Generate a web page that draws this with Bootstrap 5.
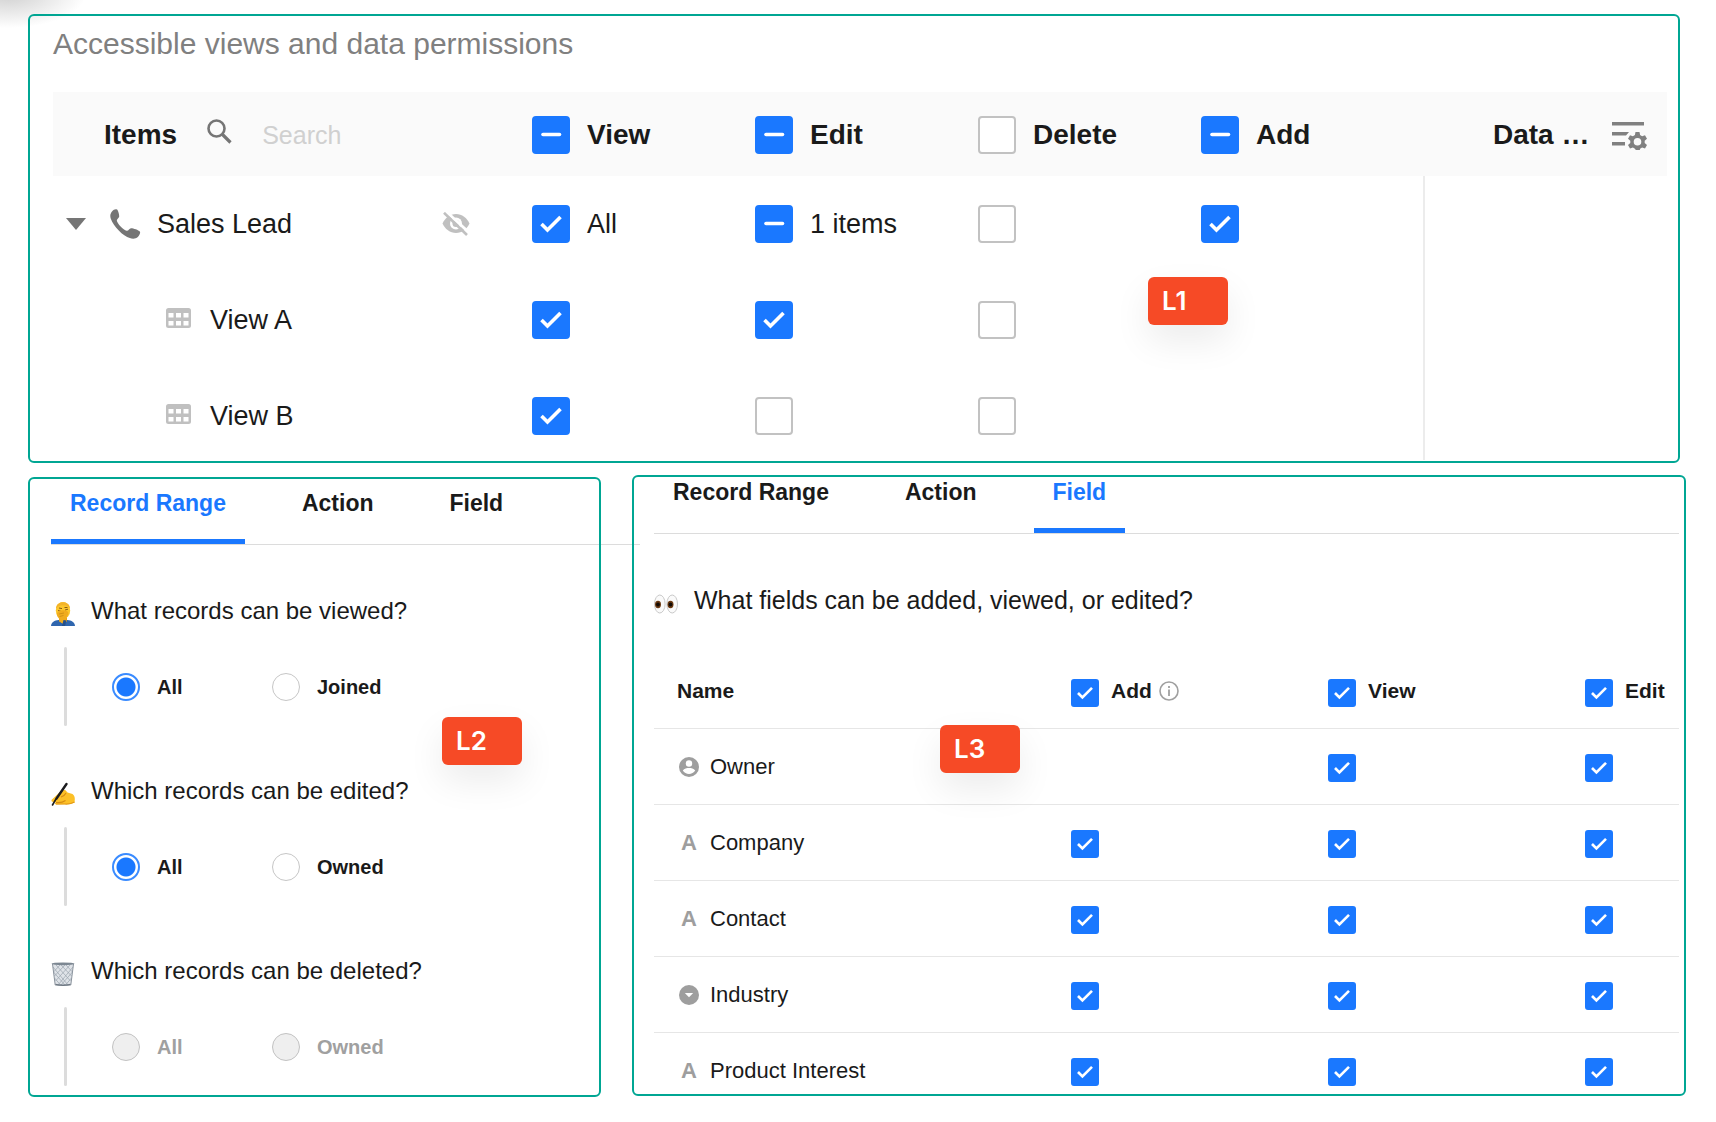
<!DOCTYPE html>
<html lang="en">
<head>
<meta charset="utf-8">
<meta name="viewport" content="width=device-width, initial-scale=1">
<title>Role permissions</title>
<link href="https://cdn.jsdelivr.net/npm/bootstrap@5.3.0/dist/css/bootstrap.min.css" rel="stylesheet">
<style>
  body {
    font-family: "Liberation Sans", Arial, sans-serif;
    color: #1a1a1a;
    background: radial-gradient(ellipse 78px 34px at 8px -6px, #d0d0d0, rgba(255,255,255,0)) no-repeat #fff;
  }
  .page { padding: 14px 30px 24px 28px; }
  .lower { gap: 31px; margin-top: 12px; }

  /* Framed panels: the frame is drawn over the content */
  .panel { position: relative; min-width: 0; }
  .panel::after { content: ""; position: absolute; inset: 0; border: 2px solid #00a693; border-radius: 6px; pointer-events: none; }
  .panel-views { margin-right: 6px; padding: 12px 13px 3px 25px; }
  .panel-range { flex: 550 1 0; margin-top: 2px; padding: 12px 0 11px 23px; }
  .panel-field { flex: 1025 1 0; margin-bottom: 1px; padding: 3px 7px 10px 22px; }

  .level-tag {
    position: absolute; z-index: 2; width: 80px; height: 48px; padding-left: 14px;
    border-radius: 6px; background: #f64a26; color: #fff;
    font: 600 26px/48px Inter, "Liberation Sans", sans-serif;
    box-shadow: 0 16px 36px rgba(0,0,0,.08);
  }
  .tag-1 { top: 263px; right: 452px; }
  .tag-2 { top: 240px; right: 79px; }
  .tag-3 { top: 250px; left: 308px; }

  .form-check-input[type=checkbox], .form-check-input[type=radio] { margin: 0; flex: none; box-shadow: none; }
  .form-check-input[type=checkbox] { width: 28px; height: 28px; border: 2px solid #c2c2c2; border-radius: 3px; background-origin: border-box; background-size: 100% 100%; }
  .panel-views .form-check-input[type=checkbox] { width: 38px; height: 38px; border-radius: 4px; }
  .form-check-input[type=checkbox]:checked, .form-check-input[type=checkbox]:indeterminate { background-color: #1a78ff; border-color: #1a78ff; }
  .form-check-input[type=checkbox]:checked { background-image: url("data:image/svg+xml,%3Csvg xmlns='http://www.w3.org/2000/svg' viewBox='0 0 38 38'%3E%3Cpath d='M9.500 19l6 6L28.500 12' fill='none' stroke='%23fff' stroke-width='3.6'/%3E%3C/svg%3E"); }
  .form-check-input[type=checkbox]:indeterminate { background-image: url("data:image/svg+xml,%3Csvg xmlns='http://www.w3.org/2000/svg' viewBox='0 0 38 38'%3E%3Cpath d='M11 18.500h16.500' fill='none' stroke='%23fff' stroke-width='3.6' stroke-linecap='round'/%3E%3C/svg%3E"); }

  .panel-title { margin: 0 0 30px; font-size: 30px; line-height: 36px; font-weight: 400; color: #808080; }
  .perm-grid, .field-grid { width: 100%; table-layout: fixed; border-collapse: separate; border-spacing: 0; }
  .perm-grid th, .perm-grid td { padding: 29px 0; height: 96px; font-size: 27px; line-height: 38px; font-weight: 400; }
  .perm-grid thead th { padding: 24px 0 22px; height: 84px; background: #fafafa; font-size: 28px; font-weight: 700; }
  .perm-grid tbody tr:last-child > * { padding-bottom: 25px; height: 92px; }
  .perm-grid tbody td:last-child { border-left: 2px solid #ececec; }
  .col-perm { width: 223px; }
  .col-add { width: 222px; }
  .col-data { width: 244px; }
  .mark-row { display: flex; align-items: center; gap: 17px; }
  .items-head { padding-left: 51px; }
  .search-ico { margin: 0 30px 8px; }
  .search-box { width: 160px; padding: 0; border: 0; background: transparent; font-size: 25px; line-height: 38px; outline: 0; }
  .search-box::placeholder { color: #d0d0d0; opacity: 1; }
  .lead-row { padding: 0 62px 0 13px; }
  .lead-ico { margin: 0 16px 0 24px; }
  .sub-row { padding-left: 113px; gap: 19px; }
  .sub-row svg { margin-bottom: 5px; }
  .data-head { padding-left: 70px; gap: 23px; }
  .bare { padding: 0; border: 0; background: none; line-height: 0; }

  .tab-strip { gap: 38px; border-bottom: 1px solid #dcdcdc; }
  .tab-strip .nav-link { padding: 0 19px 22px; border-bottom: 5px solid transparent; font-size: 23px; line-height: 28px; font-weight: 700; color: #1a1a1a; }
  .tab-strip .nav-link.active { color: #1a78ff; border-color: #1a78ff; }
  .panel-range .tab-strip { margin-right: -39px; }

  .ask { display: flex; align-items: flex-end; gap: 16px; margin: 0; font-size: 24px; line-height: 30px; font-weight: 400; }
  .panel-range .ask { margin-top: 50px; }
  .panel-range .tab-strip + .ask { margin-top: 51px; }
  .panel-field .ask { margin-top: 51px; font-size: 25px; }
  .choices { display: flex; align-items: center; height: 79px; margin: 21px 0 0 13px; padding-left: 48px; position: relative; }
  .choices::before { content: ""; position: absolute; inset: 0 auto 0 0; width: 3px; border-radius: 2px; background: #dcdcdc; }
  .choice { display: flex; align-items: center; gap: 17px; width: 160px; font-size: 20px; line-height: 28px; font-weight: 700; }
  .form-check-input[type=radio] { width: 28px; height: 28px; border: 1px solid #c6c6c6; }
  .form-check-input[type=radio]:checked { background: radial-gradient(circle, #1a78ff 9px, #fff 10px); border: 2px solid #3a8bff; }
  .form-check-input[type=radio]:disabled { opacity: 1; background: #efefef; border-color: #c2c2c2; }
  .form-check-input[type=radio]:disabled ~ label { opacity: 1; color: #a0a0a0; }

  .field-grid { margin-top: 39px; }
  .field-grid th, .field-grid td { padding: 25px 0 22px; vertical-align: top; border-bottom: 1px solid #e6e6e6; font-size: 22px; line-height: 26px; font-weight: 400; }
  .field-grid thead th { padding-bottom: 21px; font-size: 21px; line-height: 24px; font-weight: 700; }
  .field-grid th:first-child { padding-left: 23px; }
  .field-grid tbody tr:last-child > * { border: 0; padding-bottom: 0; }
  .field-grid input { display: block; }
  .col-flag { width: 257px; }
  .col-last { width: 94px; }
  .flag-head { display: flex; gap: 12px; }
  .flag-note { display: flex; gap: 7px; }
  .field-name { display: flex; align-items: center; gap: 11px; padding-left: 2px; }
  .type-ico { width: 20px; flex: none; text-align: center; font-weight: 700; color: #9e9e9e; line-height: 26px; display: flex; justify-content: center; align-items: center; height: 26px; }
</style>
</head>
<body>
<main class="page">

  <section class="panel panel-views" aria-labelledby="views-title">
    <h2 class="panel-title" id="views-title">Accessible views and data permissions</h2>
    <table class="perm-grid">
      <colgroup><col><col class="col-perm"><col class="col-perm"><col class="col-perm"><col class="col-add"><col class="col-data"></colgroup>
      <thead>
        <tr>
          <th scope="col">
            <div class="d-flex align-items-center items-head">
              <label for="search">Items</label>
              <svg class="search-ico" width="25" height="25" viewBox="0 0 25 25" fill="none" stroke="#757575" stroke-width="2.600" aria-hidden="true"><circle cx="9.500" cy="9.500" r="8"/><path d="M15 15l8.500 8.500" stroke-width="3.200"/></svg>
              <input class="search-box" id="search" type="text" placeholder="Search">
            </div>
          </th>
          <th scope="col"><div class="mark-row"><input class="form-check-input" type="checkbox" id="h-view" data-partial><label for="h-view">View</label></div></th>
          <th scope="col"><div class="mark-row"><input class="form-check-input" type="checkbox" id="h-edit" data-partial><label for="h-edit">Edit</label></div></th>
          <th scope="col"><div class="mark-row"><input class="form-check-input" type="checkbox" id="h-del"><label for="h-del">Delete</label></div></th>
          <th scope="col"><div class="mark-row"><input class="form-check-input" type="checkbox" id="h-add" data-partial><label for="h-add">Add</label></div></th>
          <th scope="col">
            <div class="d-flex align-items-center data-head">
              <span>Data …</span>
              <button class="bare" type="button" aria-label="Data settings">
                <svg width="35" height="30" viewBox="0 0 35 30" aria-hidden="true"><path d="M0 2h32v3.500H0zM0 12h17l-3 3.500H0zM0 22h13v3.500H0z" fill="#808080"/><path d="M23.500 12h4l.6 3 2 1.200 2.900-1 2 3.500-2.300 2v2.400l2.300 2-2 3.500-2.900-1-2 1.200-.3 1.200h-4l-.9-1.200-2-1.200-2.900 1-2-3.500 2.300-2v-2.400l-2.300-2 2-3.500 2.900 1 2-1.200zM25.500 18a3.800 3.800 0 100 7.600 3.800 3.800 0 000-7.600z" fill="#808080" fill-rule="evenodd"/></svg>
              </button>
            </div>
          </th>
        </tr>
      </thead>
      <tbody>
        <tr>
          <th scope="row">
            <div class="d-flex align-items-center lead-row">
              <button class="bare" type="button" aria-label="Collapse Sales Lead"><svg width="20" height="12" viewBox="0 0 20 12" aria-hidden="true"><path d="M0 0h20L10 12z" fill="#757575"/></svg></button>
              <svg class="lead-ico" width="31" height="30" viewBox="0 0 31 30" aria-hidden="true"><path d="M2 2.500C3.500.8 5.500-.2 7 .6c1 .6 2.300 5 2.200 6.800-.1 1.600-2.600 2.400-2.400 4.200.4 3 6.600 9.600 9.800 10.200 2 .3 2.700-2.400 4.400-2.500 2-.1 7.600 1.800 8.800 3.200 1 1.300-.4 4-2 5.500-2 1.900-5.300 2-8 1C13 27.300 3.600 17.500.8 9.800-.2 7.200.3 4.500 2 2.500z" fill="#757575"/></svg>
              <span class="flex-grow-1">Sales Lead</span>
              <svg width="28" height="24" viewBox="0 0 28 24" aria-hidden="true"><path d="M14 2C8 2 3 6 .5 11.500 3 17 8 21 14 21s11-4 13.500-9.500C25 6 20 2 14 2z" fill="#c0c0c0"/><circle cx="14" cy="11.500" r="6" fill="#fff"/><circle cx="14" cy="11.500" r="3.500" fill="#c0c0c0"/><path d="M4-.5L27.500 21" stroke="#fff" stroke-width="3"/><path d="M2 .8L25 23" stroke="#c0c0c0" stroke-width="2.600"/></svg>
            </div>
          </th>
          <td><div class="mark-row"><input class="form-check-input" type="checkbox" id="s-view" checked><label for="s-view">All</label></div></td>
          <td><div class="mark-row"><input class="form-check-input" type="checkbox" id="s-edit" data-partial><label for="s-edit">1 items</label></div></td>
          <td><div class="mark-row"><input class="form-check-input" type="checkbox" aria-label="Delete Sales Lead"></div></td>
          <td><div class="mark-row"><input class="form-check-input" type="checkbox" aria-label="Add Sales Lead" checked></div></td>
          <td></td>
        </tr>
        <tr>
          <th scope="row"><div class="d-flex align-items-center sub-row"><svg width="25" height="20" viewBox="0 0 25 20" aria-hidden="true"><rect width="25" height="20" rx="2.500" fill="#c0c0c0"/><path d="M2.500 5h5v4.500h-5zM10 5h5v4.500h-5zM17.500 5h5v4.500h-5zM2.500 13h5v4.500h-5zM10 13h5v4.500h-5zM17.500 13h5v4.500h-5z" fill="#fff"/></svg><span>View A</span></div></th>
          <td><div class="mark-row"><input class="form-check-input" type="checkbox" aria-label="View, View A" checked></div></td>
          <td><div class="mark-row"><input class="form-check-input" type="checkbox" aria-label="Edit, View A" checked></div></td>
          <td><div class="mark-row"><input class="form-check-input" type="checkbox" aria-label="Delete, View A"></div></td>
          <td></td>
          <td></td>
        </tr>
        <tr>
          <th scope="row"><div class="d-flex align-items-center sub-row"><svg width="25" height="20" viewBox="0 0 25 20" aria-hidden="true"><rect width="25" height="20" rx="2.500" fill="#c0c0c0"/><path d="M2.500 5h5v4.500h-5zM10 5h5v4.500h-5zM17.500 5h5v4.500h-5zM2.500 13h5v4.500h-5zM10 13h5v4.500h-5zM17.500 13h5v4.500h-5z" fill="#fff"/></svg><span>View B</span></div></th>
          <td><div class="mark-row"><input class="form-check-input" type="checkbox" aria-label="View, View B" checked></div></td>
          <td><div class="mark-row"><input class="form-check-input" type="checkbox" aria-label="Edit, View B"></div></td>
          <td><div class="mark-row"><input class="form-check-input" type="checkbox" aria-label="Delete, View B"></div></td>
          <td></td>
          <td></td>
        </tr>
      </tbody>
    </table>
    <span class="level-tag tag-1">L1</span>
  </section>

  <div class="d-flex align-items-stretch lower">

    <section class="panel panel-range">
      <nav class="nav flex-nowrap tab-strip">
        <a class="nav-link active" href="#" aria-current="page">Record Range</a>
        <a class="nav-link" href="#">Action</a>
        <a class="nav-link" href="#">Field</a>
      </nav>

      <h3 class="ask">
        <svg width="24" height="24" viewBox="0 0 24 24" aria-hidden="true"><path d="M0 24c.3-4 3.500-5.500 7.500-6h9c4 .5 7.200 2 7.500 6z" fill="#2f66ae"/><path d="M8 15h8v4.500l-4 2-4-2z" fill="#e8a41c"/><ellipse cx="12" cy="8.500" rx="7.200" ry="8.500" fill="#fcc62c"/><path d="M5 7C5 2.500 8 .3 12 .3S19 2.500 19 7c-1.500-3-3.500-3.800-7-3.800S6.500 4 5 7z" fill="#f3b329"/><path d="M7 8.500l3.500 1M14 8l3-.8M8 6l3 .6M13.500 5.500h3" stroke="#8a5a14" stroke-width="1"/><path d="M6 11c2-2.500 5-3 8-2.500 3 .3 4 2 3 4.500l-2 3.500-.5 4.500c-2 1-4 .5-4.700-1L8 16.500C6.500 15 5.500 13 6 11z" fill="#f0ac1e"/><path d="M8 12l5-1M8.500 14.500l4-1" stroke="#c98a14" stroke-width=".8"/><path d="M12.500 18l3 .5L14 24h-3z" fill="#24508e"/></svg>
        <span>What records can be viewed?</span>
      </h3>
      <div class="choices" role="radiogroup" aria-label="What records can be viewed?">
        <div class="choice"><input class="form-check-input" type="radio" name="viewed" id="v-all" checked><label for="v-all">All</label></div>
        <div class="choice"><input class="form-check-input" type="radio" name="viewed" id="v-join"><label for="v-join">Joined</label></div>
      </div>

      <h3 class="ask">
        <svg width="24" height="24" viewBox="0 0 24 24" aria-hidden="true"><path d="M1.500 17l7-6.500c2-2 4-2.800 6-2.200l2 2.200 5 1.500c1.500 1 2.500 3 2.300 5.500l-.3 3c-3 1.500-6 2-10 1.800l-8 .2c-2 0-2.200-1.500-.5-2.300l-3-.2c-2-.3-2-2-.5-3z" fill="#fcc027"/><path d="M5 20.500c4 .5 7-.2 9.500-2M10 15c2-.5 4-2 5-4" fill="none" stroke="#d68b12" stroke-width="1.100"/><path d="M5 22h9c4 .2 7-.5 9.600-2" fill="none" stroke="#e39a17" stroke-width="1.200"/><path d="M15.500 2L5.500 16.500" stroke="#1c1c1e" stroke-width="2.400" stroke-linecap="round"/><path d="M5 17L1.500 23" stroke="#1c1c1e" stroke-width="1.600" stroke-linecap="round"/></svg>
        <span>Which records can be edited?</span>
      </h3>
      <div class="choices" role="radiogroup" aria-label="Which records can be edited?">
        <div class="choice"><input class="form-check-input" type="radio" name="edited" id="e-all" checked><label for="e-all">All</label></div>
        <div class="choice"><input class="form-check-input" type="radio" name="edited" id="e-own"><label for="e-own">Owned</label></div>
      </div>

      <h3 class="ask">
        <svg width="24" height="24" viewBox="0 0 24 24" aria-hidden="true"><path d="M1.500 2h21L19.800 23c-3 1-12.600 1-15.600 0z" fill="#dfe3e8"/><path d="M2 5l15 18M5 3l14.500 16M10 3l10.500 11M15 3l6.500 7M2.500 10L14 23M3.500 16l6 7M22 5L7 23M19 3L4.500 19M14 3L3.500 14M9 3L2.500 10M21.500 10L10 23M20.500 16l-6 7" stroke="#9aa3ad" stroke-width=".7"/><path d="M4.200 22.500c3 .9 12.600.9 15.600 0" fill="none" stroke="#6e7883" stroke-width="1.600"/><path d="M1.500 2l2.700 21M22.500 2l-2.700 21" stroke="#8b949e"/><ellipse cx="12" cy="1.800" rx="11.500" ry="1.400" fill="#7c8792"/></svg>
        <span>Which records can be deleted?</span>
      </h3>
      <div class="choices" role="radiogroup" aria-label="Which records can be deleted?">
        <div class="choice"><input class="form-check-input" type="radio" name="deleted" id="d-all" disabled><label for="d-all">All</label></div>
        <div class="choice"><input class="form-check-input" type="radio" name="deleted" id="d-own" disabled><label for="d-own">Owned</label></div>
      </div>
      <span class="level-tag tag-2">L2</span>
    </section>

    <section class="panel panel-field">
      <nav class="nav flex-nowrap tab-strip">
        <a class="nav-link" href="#">Record Range</a>
        <a class="nav-link" href="#">Action</a>
        <a class="nav-link active" href="#" aria-current="page">Field</a>
      </nav>
      <h3 class="ask">
        <svg width="24" height="24" viewBox="0 0 24 24" aria-hidden="true"><g fill="#fafafa" stroke="#c9c9c9"><ellipse cx="5.800" cy="13" rx="5.300" ry="9"/><ellipse cx="18.200" cy="13" rx="5.300" ry="9"/></g><ellipse cx="4" cy="13.500" rx="3" ry="3.700" fill="#6b3a12"/><ellipse cx="16.500" cy="13.500" rx="3" ry="3.700" fill="#6b3a12"/><circle cx="4" cy="13.500" r="1.900" fill="#120a04"/><circle cx="16.500" cy="13.500" r="1.900" fill="#120a04"/></svg>
        <span>What fields can be added, viewed, or edited?</span>
      </h3>
      <table class="field-grid">
        <colgroup><col><col class="col-flag"><col class="col-flag"><col class="col-last"></colgroup>
        <thead>
          <tr>
            <th scope="col">Name</th>
            <th scope="col">
              <div class="flag-head">
                <input class="form-check-input" type="checkbox" id="f-add" checked>
                <div class="flag-note">
                  <label for="f-add">Add</label>
                  <svg width="20" height="24" viewBox="0 0 20 24" aria-hidden="true"><circle cx="10" cy="12" r="9" fill="none" stroke="#a0a0a0" stroke-width="1.600"/><path d="M10 10.500v6.500M10 7v2" stroke="#a0a0a0" stroke-width="1.800"/></svg>
                </div>
              </div>
            </th>
            <th scope="col"><div class="flag-head"><input class="form-check-input" type="checkbox" id="f-view" checked><label for="f-view">View</label></div></th>
            <th scope="col"><div class="flag-head"><input class="form-check-input" type="checkbox" id="f-edit" checked><label for="f-edit">Edit</label></div></th>
          </tr>
        </thead>
        <tbody>
          <tr>
            <th scope="row"><div class="field-name"><span class="type-ico"><svg width="20" height="20" viewBox="0 0 20 20" aria-hidden="true"><circle cx="10" cy="10" r="10" fill="#9e9e9e"/><circle cx="10" cy="6.500" r="3.200" fill="#fff"/><path d="M3.800 13.500c1.500-2 4-2.500 6.200-2.500s4.700.5 6.200 2.500c-1.400 2.200-3.700 3.500-6.200 3.500s-4.800-1.300-6.200-3.500z" fill="#fff"/></svg></span>Owner</div></th>
            <td></td>
            <td><input class="form-check-input" type="checkbox" aria-label="View Owner" checked></td>
            <td><input class="form-check-input" type="checkbox" aria-label="Edit Owner" checked></td>
          </tr>
          <tr>
            <th scope="row"><div class="field-name"><span class="type-ico">A</span>Company</div></th>
            <td><input class="form-check-input" type="checkbox" aria-label="Add Company" checked></td>
            <td><input class="form-check-input" type="checkbox" aria-label="View Company" checked></td>
            <td><input class="form-check-input" type="checkbox" aria-label="Edit Company" checked></td>
          </tr>
          <tr>
            <th scope="row"><div class="field-name"><span class="type-ico">A</span>Contact</div></th>
            <td><input class="form-check-input" type="checkbox" aria-label="Add Contact" checked></td>
            <td><input class="form-check-input" type="checkbox" aria-label="View Contact" checked></td>
            <td><input class="form-check-input" type="checkbox" aria-label="Edit Contact" checked></td>
          </tr>
          <tr>
            <th scope="row"><div class="field-name"><span class="type-ico"><svg width="20" height="20" viewBox="0 0 20 20" aria-hidden="true"><circle cx="10" cy="10" r="10" fill="#9e9e9e"/><path d="M5.800 8h8.400L10 12.200z" fill="#fff"/></svg></span>Industry</div></th>
            <td><input class="form-check-input" type="checkbox" aria-label="Add Industry" checked></td>
            <td><input class="form-check-input" type="checkbox" aria-label="View Industry" checked></td>
            <td><input class="form-check-input" type="checkbox" aria-label="Edit Industry" checked></td>
          </tr>
          <tr>
            <th scope="row"><div class="field-name"><span class="type-ico">A</span>Product Interest</div></th>
            <td><input class="form-check-input" type="checkbox" aria-label="Add Product Interest" checked></td>
            <td><input class="form-check-input" type="checkbox" aria-label="View Product Interest" checked></td>
            <td><input class="form-check-input" type="checkbox" aria-label="Edit Product Interest" checked></td>
          </tr>
        </tbody>
      </table>
      <span class="level-tag tag-3">L3</span>
    </section>
  </div>
</main>
<script src="https://cdn.jsdelivr.net/npm/bootstrap@5.3.0/dist/js/bootstrap.bundle.min.js"></script>
<script>
  // Partly granted permissions show a dash
  document.querySelectorAll('[data-partial]').forEach(function (box) { box.indeterminate = true; });
</script>
</body>
</html>
